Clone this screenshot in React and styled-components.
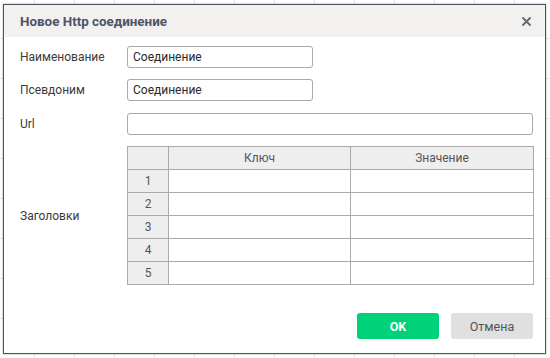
import React from "react";
import styled, { createGlobalStyle } from "styled-components";

const Global = createGlobalStyle`
  html, body { margin: 0; padding: 0; }
  body {
    width: 550px;
    height: 358px;
    overflow: hidden;
    font-family: Roboto, "Liberation Sans", Arial, sans-serif;
    background-color: #fff;
    background-image:
      linear-gradient(to right, #e6e6e6 1px, transparent 1px),
      linear-gradient(to bottom, #e6e6e6 1px, transparent 1px);
    background-size: 40px 40px;
    background-position: 34px 38px;
  }
`;

const Page = styled.div`
  padding: 4px 0 0 3px;
`;

const Dialog = styled.div`
  box-sizing: border-box;
  width: 543px;
  height: 350px;
  background: #fff;
  border: 1px solid #4b5260;
  box-shadow: 0 0 2px rgba(0, 0, 0, 0.35);
  display: flex;
  flex-direction: column;
`;

const Header = styled.div`
  height: 32px;
  background: #f2f1f0;
  display: flex;
  align-items: center;
  justify-content: space-between;
  padding: 0 12px 0 16px;
`;

const Title = styled.div`
  font-size: 13.4px;
  font-weight: bold;
  color: #4b5567;
`;

const Close = styled.button`
  border: none;
  background: none;
  padding: 0;
  width: 14px;
  height: 14px;
  display: flex;
  align-items: center;
  justify-content: center;
  cursor: pointer;
`;

const Body = styled.div`
  flex: 1;
  display: flex;
  flex-direction: column;
  padding: 9px 12px 14px 16px;
`;

const Row = styled.div`
  display: grid;
  grid-template-columns: 107px 1fr;
  align-items: center;
  margin-bottom: ${(p) => p.$gap ?? 11}px;
`;

const Label = styled.label`
  font-size: 12px;
  color: #3a3a3a;
`;

const Input = styled.input`
  box-sizing: border-box;
  width: ${(p) => (p.$full ? "406px" : "186px")};
  height: 22px;
  border: 1px solid #a9a9a9;
  border-radius: 3px;
  padding: 0 5px;
  font-family: inherit;
  font-size: 12px;
  color: #2a2a2a;
  outline: none;
`;

const Table = styled.table`
  border-collapse: collapse;
  width: 406px;
  table-layout: fixed;
  font-size: 12px;
  color: #555;
`;

const Cell = styled.td`
  border: 1px solid #aaaaaa;
  height: 22px;
  padding: 0;
  text-align: center;
  font-weight: normal;
  background: ${(p) => (p.$head ? "#eeeeee" : "#fff")};
`;

const Footer = styled.div`
  margin-top: auto;
  display: flex;
  justify-content: flex-end;
  gap: 12px;
`;

const Button = styled.button`
  width: 82px;
  height: 26px;
  border: none;
  border-radius: 3px;
  font-family: inherit;
  font-size: 12.5px;
  cursor: pointer;
  background: ${(p) => (p.$primary ? "#00d27a" : "#e0e0e0")};
  color: ${(p) => (p.$primary ? "#fff" : "#555")};
  font-weight: ${(p) => (p.$primary ? "bold" : "normal")};
`;

export default function App() {
  const rows = [1, 2, 3, 4, 5];
  return (
    <Page>
      <Global />
      <Dialog>
        <Header>
          <Title>Новое Http соединение</Title>
          <Close aria-label="close">
            <svg width="9" height="9" viewBox="0 0 9 9">
              <path d="M1 1L8 8M8 1L1 8" stroke="#666" strokeWidth="1.8" strokeLinecap="round" />
            </svg>
          </Close>
        </Header>
        <Body>
          <Row>
            <Label>Наименование</Label>
            <Input defaultValue="Соединение" />
          </Row>
          <Row $gap={12}>
            <Label>Псевдоним</Label>
            <Input defaultValue="Соединение" />
          </Row>
          <Row>
            <Label>Url</Label>
            <Input $full defaultValue="" />
          </Row>
          <Row $gap={0}>
            <Label>Заголовки</Label>
            <Table>
              <colgroup>
                <col style={{ width: 41 }} />
                <col style={{ width: 182 }} />
                <col style={{ width: 183 }} />
              </colgroup>
              <thead>
                <tr>
                  <Cell as="th" $head />
                  <Cell as="th" $head>Ключ</Cell>
                  <Cell as="th" $head>Значение</Cell>
                </tr>
              </thead>
              <tbody>
                {rows.map((n) => (
                  <tr key={n}>
                    <Cell $head>{n}</Cell>
                    <Cell />
                    <Cell />
                  </tr>
                ))}
              </tbody>
            </Table>
          </Row>
          <Footer>
            <Button $primary>OK</Button>
            <Button>Отмена</Button>
          </Footer>
        </Body>
      </Dialog>
    </Page>
  );
}
